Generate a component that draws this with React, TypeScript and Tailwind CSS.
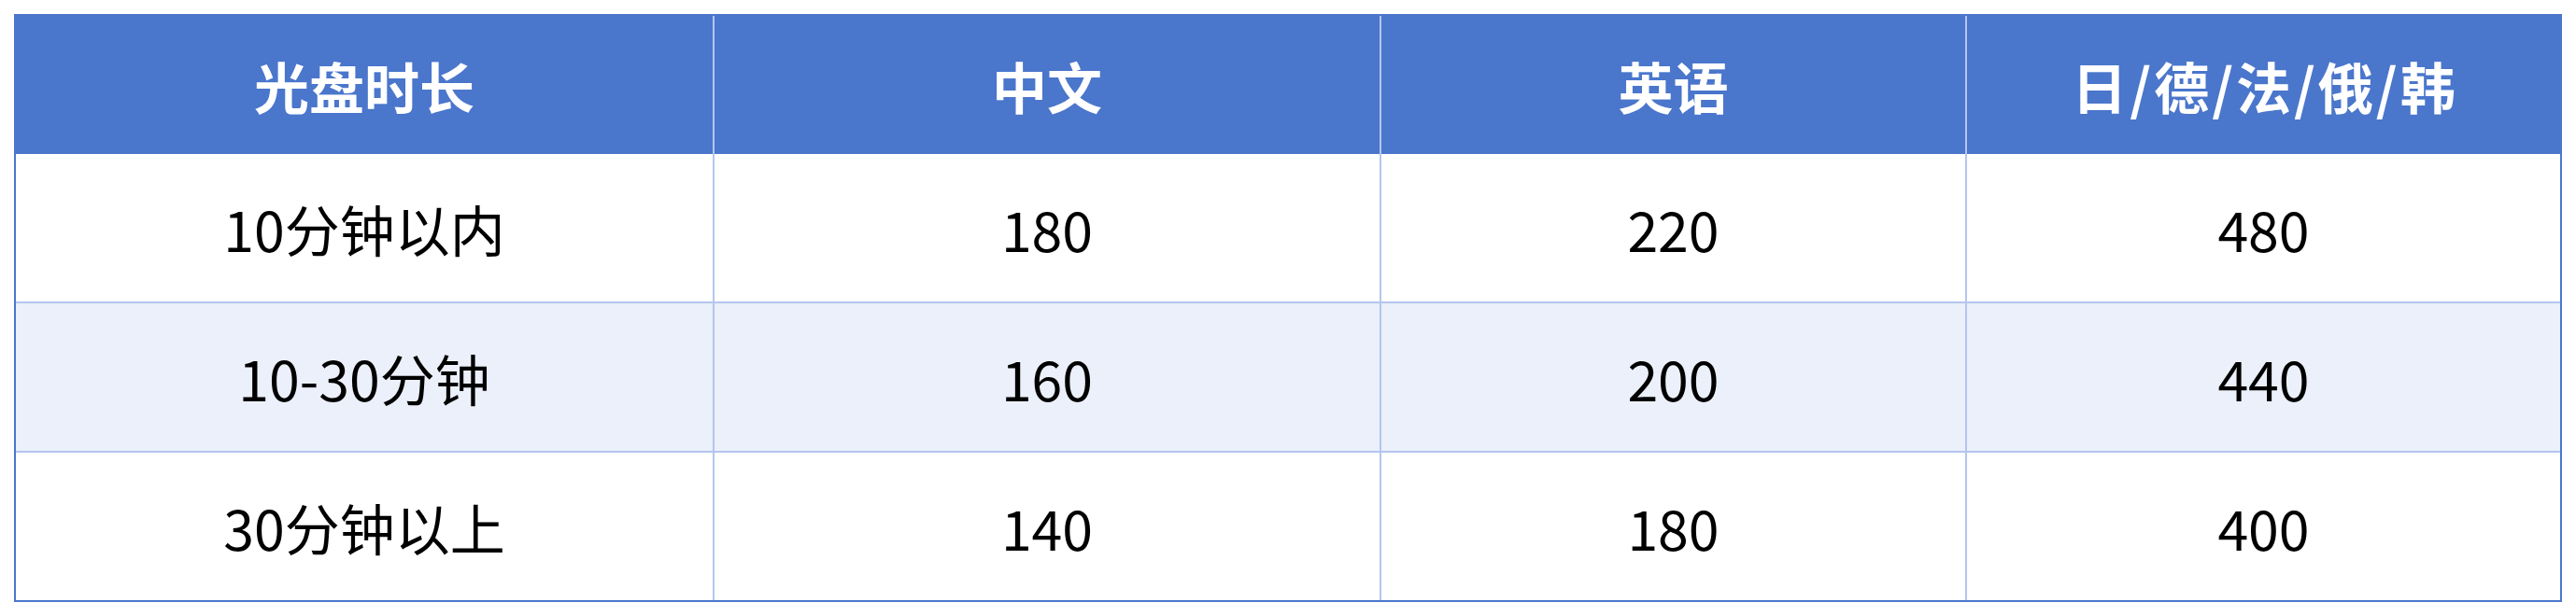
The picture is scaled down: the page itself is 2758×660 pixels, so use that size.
import React from "react";

const rows = [
  ["10分钟以内", "180", "220", "480"],
  ["10-30分钟", "160", "200", "440"],
  ["30分钟以上", "140", "180", "400"],
];

const colCls = [
  "",
  "border-l-2 border-[#b4c6ee]",
  "border-l-2 border-[#b4c6ee]",
  "border-l-2 border-[#b4c6ee]",
];

function LangHeader() {
  const parts = ["日", "德", "法", "俄", "韩"];
  return (
    <span>
      {parts.map((p, i) => (
        <React.Fragment key={i}>
          {i > 0 && <span className="mx-[3px]">/</span>}
          {p}
        </React.Fragment>
      ))}
    </span>
  );
}

export default function App() {
  const headers: React.ReactNode[] = ["光盘时长", "中文", "英语", <LangHeader key="l" />];
  return (
    <div className="w-[2758px] h-[660px] bg-white pt-[15px] pl-[15px] font-['Microsoft_YaHei','Noto_Sans_CJK_SC',sans-serif]">
      <div className="w-[2728px] border-2 border-[#4a76cc]">
        <div className="grid grid-cols-[746px_714px_627px_637px] h-[148px] bg-[#4a76cc]">
          {headers.map((h, i) => (
            <div
              key={i}
              className={`flex items-center justify-center text-white font-bold text-[59px] leading-none ${colCls[i]}`}
            >
              {h}
            </div>
          ))}
        </div>
        {rows.map((r, ri) => (
          <div
            key={ri}
            className={
              ri === 0
                ? "grid grid-cols-[746px_714px_627px_637px] h-[160px] bg-white border-b-2 border-[#b4c6ee]"
                : ri === 1
                ? "grid grid-cols-[746px_714px_627px_637px] h-[160px] bg-[#ebf0fa] border-b-2 border-[#b4c6ee]"
                : "grid grid-cols-[746px_714px_627px_637px] h-[158px] bg-white"
            }
          >
            {r.map((c, ci) => (
              <div
                key={ci}
                className={`flex items-center justify-center text-black text-[59px] leading-none ${colCls[ci]}`}
              >
                {c}
              </div>
            ))}
          </div>
        ))}
      </div>
    </div>
  );
}
